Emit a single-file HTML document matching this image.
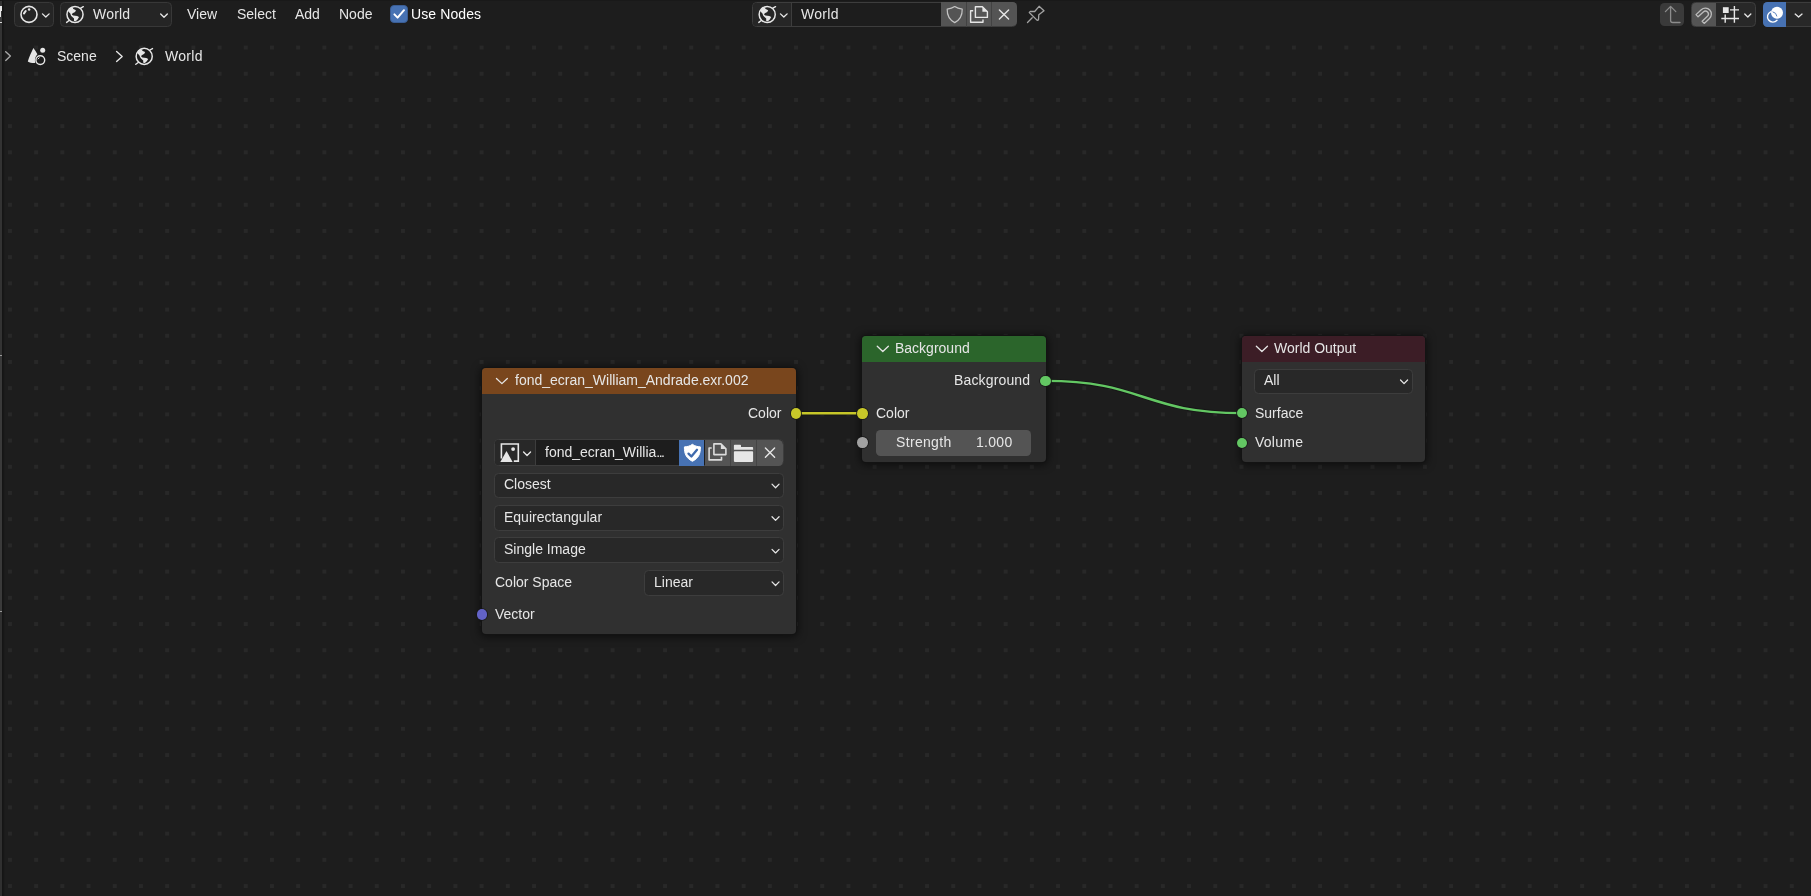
<!DOCTYPE html>
<html lang="en">
<head>
<meta charset="utf-8">
<title>Blender Shader Editor - World</title>
<style>
*{box-sizing:border-box;margin:0;padding:0}
html,body{width:1811px;height:896px;overflow:hidden;background:#1d1d1d}
body{position:relative;font-family:"Liberation Sans","DejaVu Sans",sans-serif;font-size:14px;color:#e6e6e6}
.abs{position:absolute}
#canvas{position:absolute;left:0;top:0;width:1811px;height:896px;background-color:#1d1d1d}
#dots{position:absolute;left:0;top:0;width:1811px;height:896px;background-color:#1d1d1d;
 background-image:linear-gradient(to bottom,rgba(29,29,29,0) 0,rgba(29,29,29,0) 4px,#1d1d1d 4px,#1d1d1d 100%),linear-gradient(to right,#282828 0,#282828 4px,rgba(40,40,40,0) 4px,rgba(40,40,40,0) 100%);
 background-size:100% 26.207px,26.207px 100%;background-position:0 45.6px,8px 0;background-repeat:repeat,repeat}
#leftstrip{position:absolute;left:0;top:0;width:2px;height:896px;background:linear-gradient(#333 0,#333 355px,#9a9a9a 355px,#9a9a9a 356px,#3a3a3a 356px,#3a3a3a 611px,#9a9a9a 611px,#9a9a9a 612px,#303030 612px)}
#leftline{position:absolute;left:2px;top:0;width:3px;height:896px;background:linear-gradient(to right,#141414 0,#171717 50%,#1d1d1d 100%)}
#header{position:absolute;left:4px;top:0;width:1807px;height:29px;background:#1d1d1d}
#topline{position:absolute;left:0;top:0;width:1811px;height:1px;background:#191919}
.t{position:absolute;white-space:nowrap;line-height:16px;height:16px;transform:translateZ(0);will-change:transform}
.btn{position:absolute;border:1px solid #383838;background:#252525;border-radius:4.5px}
.node{position:absolute;border-radius:4px;background:#303030;box-shadow:0 0 0 1px #131313,0 1px 8px 2px rgba(0,0,0,.55)}
.node .hd{position:absolute;left:0;top:0;right:0;border-radius:4px 4px 0 0}
.sock{position:absolute;width:10.4px;height:10.4px;margin:-.4px 0 0 -.4px;border-radius:50%;box-shadow:0 0 0 .8px #171717}
.dd{position:absolute;border:1px solid #3d3d3d;background:#282828;border-radius:4.5px;height:26px}
svg{position:absolute;overflow:visible}
</style>
</head>
<body>
<div id="canvas"></div>
<div id="dots"></div>
<div id="leftstrip"></div>
<div id="leftline"></div>
<div id="header"></div>
<div id="topline"></div>
<div class="abs" style="left:0;top:5.8px;width:2px;height:5.2px;background:#e8e8e8"></div>
<div class="abs" style="left:0;top:11px;width:1px;height:6.4px;background:#e8e8e8"></div>
<div class="abs" style="left:0;top:17.4px;width:2px;height:4.2px;background:#3a3a3a"></div>
<div class="abs" style="left:0;top:21.7px;width:2px;height:1.5px;background:#d8d8d8"></div>

<!-- HEADER LEFT -->
<div class="btn" style="left:14px;top:2px;width:40px;height:25px"></div>
<div class="btn" style="left:60px;top:2px;width:112px;height:25px"></div>
<div class="t" style="left:93.3px;top:6.3px;letter-spacing:.2px">World</div>
<div class="t" style="left:187px;top:6.3px">View</div>
<div class="t" style="left:237px;top:6.3px">Select</div>
<div class="t" style="left:295px;top:6.3px">Add</div>
<div class="t" style="left:339px;top:6.3px">Node</div>
<div class="abs" style="left:390px;top:5px;width:18px;height:18px;border-radius:4px;background:#4772b3;border:1px solid #3a5d94"></div>
<div class="t" style="left:410.6px;top:6.3px;color:#fff;letter-spacing:.1px">Use Nodes</div>

<!-- BREADCRUMBS -->
<div class="t" style="left:57px;top:48.3px">Scene</div>
<div class="t" style="left:165.3px;top:48.3px;letter-spacing:.3px">World</div>

<!-- HEADER CENTER -->
<div class="abs" style="left:752px;top:2px;width:265px;height:25px;border-radius:4.5px;background:#1d1d1d;border:1px solid #3d3d3d;overflow:hidden">
  <div class="abs" style="left:0;top:0;width:39px;height:23px;background:#262626;border-right:1px solid #3d3d3d"></div>
</div>
<div class="abs" style="left:941px;top:2px;width:76px;height:24.4px;background:#545454;border-radius:0 4.5px 4.5px 0"></div>
<div class="abs" style="left:966px;top:2px;width:1px;height:24.6px;background:#424242"></div>
<div class="abs" style="left:991px;top:2px;width:1px;height:24.6px;background:#424242"></div>
<div class="t" style="left:801.3px;top:6.3px;letter-spacing:.3px">World</div>

<!-- HEADER RIGHT -->
<div class="abs" style="left:1660px;top:2.6px;width:24.3px;height:23.7px;border-radius:4.5px;background:#3a3a3a"></div>
<div class="abs" style="left:1691px;top:2px;width:65px;height:25px;border-radius:4.5px;background:#282828;border:1px solid #3d3d3d;overflow:hidden">
  <div class="abs" style="left:0;top:0;width:24px;height:23px;background:#545454"></div>
</div>
<div class="abs" style="left:1763px;top:2px;width:54px;height:25px;border-radius:4.5px;background:#282828;border:1px solid #3d3d3d"></div>
<div class="abs" style="left:1763px;top:2.2px;width:23.4px;height:24.4px;border-radius:4.5px 0 0 4.5px;background:#4772b3"></div>

<!-- NODE: IMAGE TEXTURE -->
<div class="node" id="n1" style="left:482px;top:368px;width:314px;height:266px">
  <div class="hd" style="height:26.3px;background:#79461d"></div>
  <div class="t" style="left:33px;top:4px">fond_ecran_William_Andrade.exr.002</div>
  <div class="t" style="right:15px;top:37px">Color</div>
  <div class="dd" style="left:12px;top:71px;width:290px;height:27px;overflow:hidden;background:#1d1d1d">
    <div class="abs" style="left:0;top:0;width:41px;height:25px;background:#282828;border-right:1px solid #3d3d3d"></div>
  </div>
  <div class="abs" style="left:196.7px;top:72px;width:25.8px;height:26px;background:#4772b3"></div>
  <div class="abs" style="left:222.5px;top:72px;width:78.7px;height:26px;background:#545454;border-radius:0 4.5px 4.5px 0"></div>
  <div class="abs" style="left:247.9px;top:72px;width:.9px;height:26px;background:#444"></div>
  <div class="abs" style="left:274.1px;top:72px;width:.9px;height:26px;background:#444"></div>
  <div class="t" style="left:63px;top:76px">fond_ecran_Willia<span style="letter-spacing:-1.5px">...</span></div>
  <div class="dd" style="left:12.2px;top:104.5px;width:290px;height:25.6px"></div>
  <div class="t" style="left:22px;top:108px">Closest</div>
  <div class="dd" style="left:12.2px;top:136.8px;width:290px;height:25.8px"></div>
  <div class="t" style="left:22px;top:141px">Equirectangular</div>
  <div class="dd" style="left:12.2px;top:169.3px;width:290px;height:25.4px"></div>
  <div class="t" style="left:22px;top:173px">Single Image</div>
  <div class="t" style="left:13px;top:206px">Color Space</div>
  <div class="dd" style="left:162.4px;top:201.7px;width:139.6px;height:26px"></div>
  <div class="t" style="left:172px;top:206px">Linear</div>
  <div class="t" style="left:13px;top:238px">Vector</div>
</div>

<!-- NODE: BACKGROUND -->
<div class="node" id="n2" style="left:862.3px;top:336px;width:183.3px;height:126px">
  <div class="hd" style="height:26.4px;background:#2b652b"></div>
  <div class="t" style="left:33px;top:4px">Background</div>
  <div class="t" style="right:15px;top:36px;letter-spacing:.15px">Background</div>
  <div class="t" style="left:14px;top:69px">Color</div>
  <div class="abs" style="left:13.5px;top:94.2px;width:155.6px;height:25.4px;border-radius:4.5px;background:#545454"></div>
  <div class="t" style="left:33.8px;top:98px;letter-spacing:.33px">Strength</div>
  <div class="t" style="left:114.2px;top:98px;letter-spacing:.3px">1.000</div>
</div>

<!-- NODE: WORLD OUTPUT -->
<div class="node" id="n3" style="left:1242px;top:336px;width:183.4px;height:126px">
  <div class="hd" style="height:26.4px;background:#3c1d26"></div>
  <div class="t" style="left:32px;top:4px">World Output</div>
  <div class="dd" style="left:12.3px;top:32.5px;width:158.8px;height:25.4px"></div>
  <div class="t" style="left:22px;top:36px">All</div>
  <div class="t" style="left:13px;top:69px">Surface</div>
  <div class="t" style="left:13.3px;top:98px;letter-spacing:.25px">Volume</div>
</div>

<!-- LINKS -->
<svg width="1811" height="896" style="left:0;top:0" viewBox="0 0 1811 896">
  <path d="M796 413.2 L862 413.2" stroke="#161616" stroke-width="4" fill="none"/>
  <path d="M796 413.2 L862 413.2" stroke="#c7c729" stroke-width="2.4" fill="none"/>
  <path d="M1045.5 380.9 C1143.5 380.9 1143.8 413.1 1241.8 413.1" stroke="#161616" stroke-width="4" fill="none"/>
  <path d="M1045.5 380.9 C1143.5 380.9 1143.8 413.1 1241.8 413.1" stroke="#63c763" stroke-width="2.4" fill="none"/>
</svg>

<svg width="1811" height="896" viewBox="0 0 1811 896" style="left:0;top:0">
<path d="M496.45 378.55 L501.90 383.62 L507.35 378.55" fill="none" stroke="#e6e6e6" stroke-width="1.3" stroke-linecap="round" stroke-linejoin="round"/>
<path d="M877.25 346.25 L882.80 351.52 L888.35 346.25" fill="none" stroke="#e6e6e6" stroke-width="1.3" stroke-linecap="round" stroke-linejoin="round"/>
<path d="M1256.35 346.25 L1261.90 351.52 L1267.45 346.25" fill="none" stroke="#e6e6e6" stroke-width="1.3" stroke-linecap="round" stroke-linejoin="round"/>
<path d="M501.4 458.4 V444 H518.3 V461.1 H513.8" fill="none" stroke="#e6e6e6" stroke-width="1.6" stroke-linejoin="miter"/>
<path d="M500.3 462 L506.5 450.9 L512.6 462 Z" fill="#e6e6e6"/>
<circle cx="513.1" cy="449.1" r="1.9" fill="#e6e6e6"/>
<path d="M523.57 452.07 L527.05 455.49 L530.52 452.07" fill="none" stroke="#e6e6e6" stroke-width="1.35" stroke-linecap="round" stroke-linejoin="round"/>
<path transform="translate(692.4 452.7) scale(1)" d="M0 -8.4 C-2.4 -6.6 -5 -6 -8 -5.8 C-8.2 1.2 -6 5.6 0 8.6 C6 5.6 8.2 1.2 8 -5.8 C5 -6 2.4 -6.6 0 -8.4 Z" fill="#fff" stroke="#fff" stroke-width="1" stroke-linejoin="round"/>
<path d="M688.5 453.6 L691.4 456.5 L697 449.8" fill="none" stroke="#3f6aad" stroke-width="2.3" stroke-linecap="round" stroke-linejoin="round"/>
<g transform="translate(708.3 443.2)" fill="none" stroke="#dcdcdc" stroke-width="1.6" stroke-linejoin="round"><path d="M5.6 0.7 H12.6 L17.6 5.7 V11.4 H5.6 Z"/><path d="M12.6 0.7 L17.6 5.7 H12.6 Z" fill="#dcdcdc" stroke="none"/><path d="M3.4 4.8 H0.8 V16.7 H13.2 V13.6"/></g>
<path d="M733.9 449.7 V445.5 Q733.9 444.7 734.7 444.7 H740.2 Q741 444.7 741 445.5 V447 H752.3 Q753.1 447 753.1 447.8 V449.7 Z" fill="#e6e6e6"/>
<rect x="733.9" y="451.2" width="19.2" height="10.7" rx="0.8" fill="#e6e6e6"/>
<path d="M765.4 448.0 L774.6 457.20000000000005 M774.6 448.0 L765.4 457.20000000000005" stroke="#e6e6e6" stroke-width="1.4" stroke-linecap="round" fill="none"/>
<path d="M772.02 484.12 L775.55 487.75 L779.07 484.12" fill="none" stroke="#e6e6e6" stroke-width="1.25" stroke-linecap="round" stroke-linejoin="round"/>
<path d="M772.02 516.73 L775.55 520.35 L779.07 516.73" fill="none" stroke="#e6e6e6" stroke-width="1.25" stroke-linecap="round" stroke-linejoin="round"/>
<path d="M772.02 549.33 L775.55 552.95 L779.07 549.33" fill="none" stroke="#e6e6e6" stroke-width="1.25" stroke-linecap="round" stroke-linejoin="round"/>
<path d="M772.02 581.92 L775.55 585.55 L779.07 581.92" fill="none" stroke="#e6e6e6" stroke-width="1.25" stroke-linecap="round" stroke-linejoin="round"/>
<path d="M1400.53 380.02 L1404.05 383.65 L1407.58 380.02" fill="none" stroke="#e6e6e6" stroke-width="1.25" stroke-linecap="round" stroke-linejoin="round"/>
</svg>
<!-- SOCKETS -->
<div class="sock" style="left:791.4px;top:408.5px;background:#c7c729"></div>
<div class="sock" style="left:857.6px;top:408.5px;background:#c7c729"></div>
<div class="sock" style="left:857.6px;top:437.6px;background:#a1a1a1"></div>
<div class="sock" style="left:477.2px;top:609.7px;background:#6363c7"></div>
<div class="sock" style="left:1040.8px;top:376.2px;background:#63c763"></div>
<div class="sock" style="left:1237.2px;top:408.4px;background:#63c763"></div>
<div class="sock" style="left:1237.2px;top:437.9px;background:#63c763"></div>

<svg width="1811" height="80" viewBox="0 0 1811 80" style="left:0;top:0">
<circle cx="29" cy="14.4" r="8" fill="none" stroke="#e6e6e6" stroke-width="1.6"/>
<path d="M24 13.4 L25.7 11" stroke="#e6e6e6" stroke-width="2.1" stroke-linecap="round"/><circle cx="29.1" cy="9.5" r="1.25" fill="#e6e6e6"/>
<path d="M42.47 13.88 L45.80 17.09 L49.12 13.88" fill="none" stroke="#e6e6e6" stroke-width="1.35" stroke-linecap="round" stroke-linejoin="round"/>
<g transform="translate(75 14.5)"><circle r="8.05" fill="none" stroke="#e6e6e6" stroke-width="1.5"/><path d="M-8.4 7.9 L-5.6 5.8 M5.7 -6.4 L8.3 -7.8" stroke="#e6e6e6" stroke-width="1.4" stroke-linecap="round" fill="none"/><path d="M-7 -4 L-4.6 -6.8 L-1.8 -7.2 L-2 -5.7 L0.95 -4.3 L0.1 -2.6 L-2.4 -1.25 L-3.2 -0.1 L-1.8 1 L2.1 1.5 L4 2.6 L2.6 4.9 L0.7 6.7 L-1 6.4 L-1 4 L-3.2 2.1 L-3.9 1.2 L-4.9 -1.25 L-6.3 -2.6 Z" fill="#e6e6e6"/></g>
<path d="M160.68 13.98 L164.00 17.19 L167.32 13.98" fill="none" stroke="#e6e6e6" stroke-width="1.35" stroke-linecap="round" stroke-linejoin="round"/>
<path d="M394.4 14.4 L397.6 17.6 L404 10.2" fill="none" stroke="#fff" stroke-width="2" stroke-linecap="round" stroke-linejoin="round"/>
<path d="M5.7 51.8 L10.4 56.099999999999994 L5.7 60.4" fill="none" stroke="#a8a8a8" stroke-width="1.4" stroke-linecap="round" stroke-linejoin="round"/>
<path d="M33.4 47.9 C34.7 49.8 36.4 52.2 37.4 54.2 C35.4 56 34.4 59.4 35.2 62.9 C32.6 63.2 29.8 62.5 27.8 61.4 C29.2 57 31.4 51.8 33.4 47.9 Z" fill="#e6e6e6"/>
<circle cx="42.7" cy="50.2" r="2.5" fill="#e6e6e6"/>
<circle cx="40.3" cy="60.1" r="4.4" fill="none" stroke="#e6e6e6" stroke-width="1.4"/>
<path d="M38 59 L39.2 57.8" stroke="#e6e6e6" stroke-width="1" stroke-linecap="round"/>
<path d="M116.6 51.4 L122.19999999999999 56.4 L116.6 61.4" fill="none" stroke="#e6e6e6" stroke-width="1.4" stroke-linecap="round" stroke-linejoin="round"/>
<g transform="translate(144.2 56.4)"><circle r="8.05" fill="none" stroke="#e6e6e6" stroke-width="1.5"/><path d="M-8.4 7.9 L-5.6 5.8 M5.7 -6.4 L8.3 -7.8" stroke="#e6e6e6" stroke-width="1.4" stroke-linecap="round" fill="none"/><path d="M-7 -4 L-4.6 -6.8 L-1.8 -7.2 L-2 -5.7 L0.95 -4.3 L0.1 -2.6 L-2.4 -1.25 L-3.2 -0.1 L-1.8 1 L2.1 1.5 L4 2.6 L2.6 4.9 L0.7 6.7 L-1 6.4 L-1 4 L-3.2 2.1 L-3.9 1.2 L-4.9 -1.25 L-6.3 -2.6 Z" fill="#e6e6e6"/></g>
<g transform="translate(767.2 14.5)"><circle r="8.05" fill="none" stroke="#e6e6e6" stroke-width="1.5"/><path d="M-8.4 7.9 L-5.6 5.8 M5.7 -6.4 L8.3 -7.8" stroke="#e6e6e6" stroke-width="1.4" stroke-linecap="round" fill="none"/><path d="M-7 -4 L-4.6 -6.8 L-1.8 -7.2 L-2 -5.7 L0.95 -4.3 L0.1 -2.6 L-2.4 -1.25 L-3.2 -0.1 L-1.8 1 L2.1 1.5 L4 2.6 L2.6 4.9 L0.7 6.7 L-1 6.4 L-1 4 L-3.2 2.1 L-3.9 1.2 L-4.9 -1.25 L-6.3 -2.6 Z" fill="#e6e6e6"/></g>
<path d="M780.47 13.88 L783.80 17.09 L787.12 13.88" fill="none" stroke="#e6e6e6" stroke-width="1.35" stroke-linecap="round" stroke-linejoin="round"/>
<path transform="translate(954.7 14.5) scale(0.94)" d="M0 -8.4 C-2.4 -6.6 -5 -6 -8 -5.8 C-8.2 1.2 -6 5.6 0 8.6 C6 5.6 8.2 1.2 8 -5.8 C5 -6 2.4 -6.6 0 -8.4 Z" fill="none" stroke="#c4c4c4" stroke-width="1.3" stroke-linejoin="round"/>
<g transform="translate(969.8 6)" fill="none" stroke="#e6e6e6" stroke-width="1.4" stroke-linejoin="round"><path d="M5.6 0.7 H12.6 L17.6 5.7 V11.4 H5.6 Z"/><path d="M12.6 0.7 L17.6 5.7 H12.6 Z" fill="#e6e6e6" stroke="none"/><path d="M3.4 4.8 H0.8 V16.2 H13.2 V13.6"/></g>
<path d="M999.4 9.9 L1008.6 19.1 M1008.6 9.9 L999.4 19.1" stroke="#e6e6e6" stroke-width="1.4" stroke-linecap="round" fill="none"/>
<g fill="none" stroke="#a3a3a3" stroke-width="1.3" stroke-linejoin="round" stroke-linecap="round"><path d="M1027.5 22.5 L1032.2 17.8"/><path d="M1039.1 6.3 L1044 10.7 L1038.8 14.8 L1038.5 19.8 L1037.2 20.4 L1029.3 12.5 L1030.3 11.5 L1034.7 11.5 Z"/></g>
<path d="M1665.4 11.6 L1670.6 6.4 L1675.8 11.6 M1670.6 6.6 V20.4 Q1670.6 22.5 1672.7 22.5 H1680" fill="none" stroke="#8c8c8c" stroke-width="1.3" stroke-linecap="round" stroke-linejoin="round"/>
<g transform="translate(1704.2 15.2) rotate(47)" fill="none" stroke="#bdbdbd" stroke-width="1.3" stroke-linejoin="round"><path d="M-6 5.6 V-1.6 A6 6 0 0 1 6 -1.6 V5.6 H3 V-1.6 A3 3 0 0 0 -3 -1.6 V5.6 Z"/></g>
<rect x="1722.9" y="7.2" width="5.8" height="5.8" fill="#e6e6e6"/>
<path d="M1734.4 6 V22.8 M1725.2 14.6 V22.8 M1730 9.9 H1739 M1721.3 18.5 H1739" stroke="#e6e6e6" stroke-width="1.4" fill="none"/>
<path d="M1744.77 14.08 L1747.80 16.99 L1750.83 14.08" fill="none" stroke="#e6e6e6" stroke-width="1.35" stroke-linecap="round" stroke-linejoin="round"/>
<circle cx="1777" cy="12.8" r="6" fill="#fff"/>
<path d="M1770.6 11.8 A5.4 5.4 0 1 0 1777 20.2" fill="none" stroke="#fff" stroke-width="1.4" stroke-linecap="round"/>
<path d="M1772.6 11.8 A5.4 5.4 0 0 1 1776.9 16.4" fill="none" stroke="#5b82bd" stroke-width="1"/>
<path d="M1795.17 14.08 L1798.60 16.99 L1802.03 14.08" fill="none" stroke="#e6e6e6" stroke-width="1.35" stroke-linecap="round" stroke-linejoin="round"/>
</svg>
</body>
</html>
